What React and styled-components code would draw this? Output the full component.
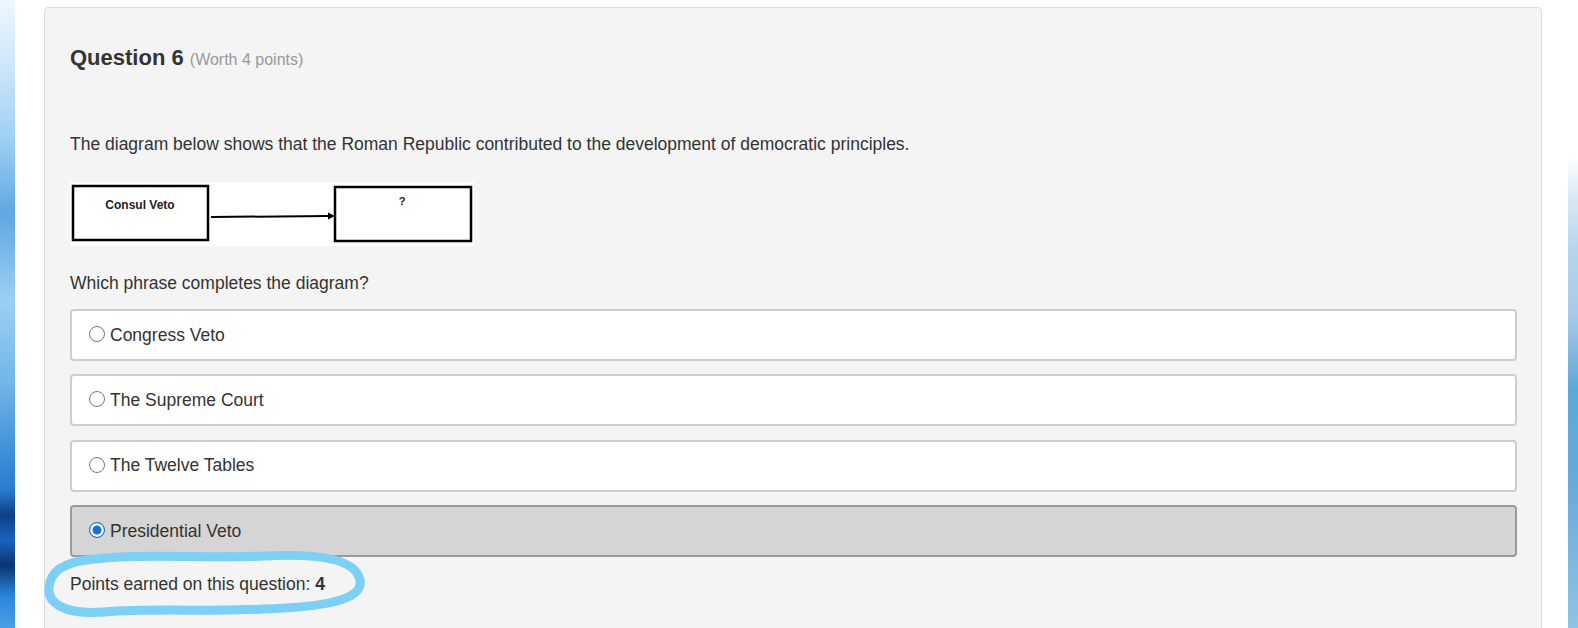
import React from "react";
import styled, { createGlobalStyle } from "styled-components";

const GlobalStyle = createGlobalStyle`
  html, body {
    margin: 0;
    padding: 0;
    background: #fff;
  }
  body {
    font-family: "Liberation Sans", Arial, sans-serif;
    color: #333;
  }
`;

const Page = styled.div`
  display: flex;
  height: 628px;
  overflow: hidden;
`;

const Wallpaper = styled.div`
  width: 15px;
  flex-shrink: 0;
  background: linear-gradient(
    180deg,
    #eef7fd 0%,
    #cfe7f9 10%,
    #9fd0f3 22%,
    #5fa8e2 34%,
    #9ccff3 48%,
    #6eb3e8 62%,
    #3f8fd8 72%,
    #2a7bd0 78%,
    #0d3f86 82%,
    #1b63be 86%,
    #0b3470 90%,
    #2c86dc 95%,
    #4aa0e4 100%
  );
`;

const SideStrip = styled.div`
  width: 10px;
  flex-shrink: 0;
  background: linear-gradient(
    180deg,
    #fff 0%,
    #fff 25%,
    #dbeaf5 31%,
    #b4d4ec 40%,
    #a7cbe8 50%,
    #5ca8dc 62%,
    #63a9db 75%,
    #8ec4e6 100%
  );
`;

const Main = styled.main`
  flex: 1;
  padding: 7px 26px 0 29px;
`;

const Panel = styled.section`
  background: #f4f4f4;
  border: 1px solid #dcdcdc;
  border-radius: 4px;
  padding: 38px 24px 60px 25px;
  min-height: 700px;
`;

const Heading = styled.h2`
  margin: 0;
  font-size: 22px;
  line-height: 24px;
  font-weight: bold;
  color: #333;
`;

const Worth = styled.span`
  font-size: 16px;
  font-weight: normal;
  color: #999;
`;

const Text = styled.p`
  margin: ${(p) => p.$top}px 0 0;
  font-size: 17.5px;
  line-height: 25px;
  color: #333;
`;

const Diagram = styled.svg`
  display: block;
  margin-top: 25px;
`;

const Options = styled.div`
  display: flex;
  flex-direction: column;
  gap: 13.4px;
  margin-top: 13.5px;
`;

const Option = styled.label`
  box-sizing: border-box;
  height: 52px;
  display: flex;
  align-items: center;
  gap: 5px;
  padding: 0 16px 0 17px;
  border: 2px solid ${(p) => (p.$selected ? "#9a9a9a" : "#cdcdcd")};
  border-radius: 4px;
  background: ${(p) => (p.$selected ? "#d5d5d5" : "#fff")};
  font-size: 17.5px;
  color: #333;
`;

const Radio = styled.input`
  appearance: none;
  box-sizing: border-box;
  width: 16px;
  height: 16px;
  margin: -2px 0 0;
  flex-shrink: 0;
  border-radius: 50%;
  border: 1px solid #767676;
  background: #fff;

  &:checked {
    border-color: #1a6fd8;
    background: #1a6fd8;
    box-shadow: inset 0 0 0 2.5px #fff;
  }
`;

const Points = styled.div`
  position: relative;
  margin-top: 14.5px;
  font-size: 17.5px;
  line-height: 25px;
  color: #333;
`;

const Scribble = styled.svg`
  position: absolute;
  left: -30px;
  top: -26px;
  pointer-events: none;
`;

const choices = [
  "Congress Veto",
  "The Supreme Court",
  "The Twelve Tables",
  "Presidential Veto",
];

function FlowDiagram() {
  return (
    <Diagram width="404" height="64" viewBox="0 0 404 64">
      <rect x="0" y="0" width="404" height="64" fill="#fff" />
      <rect x="3" y="4" width="135" height="54" fill="#fff" stroke="#000" strokeWidth="2.5" />
      <rect x="265" y="5" width="136" height="54" fill="#fff" stroke="#000" strokeWidth="2.5" />
      <line x1="141" y1="35" x2="259" y2="34" stroke="#000" strokeWidth="2" />
      <polygon points="265,34 258,30.5 258,37.5" fill="#000" />
      <text
        x="70"
        y="27"
        textAnchor="middle"
        fontFamily="Liberation Sans, Arial, sans-serif"
        fontWeight="bold"
        fontSize="12"
        fill="#222"
      >
        Consul Veto
      </text>
      <text
        x="332"
        y="23"
        textAnchor="middle"
        fontFamily="Liberation Sans, Arial, sans-serif"
        fontWeight="bold"
        fontSize="11"
        fill="#222"
      >
        ?
      </text>
    </Diagram>
  );
}

export default function App() {
  const selected = 3;
  return (
    <>
      <GlobalStyle />
      <Page>
        <Wallpaper />
        <Main>
          <Panel>
            <Heading>
              Question 6 <Worth>(Worth 4 points)</Worth>
            </Heading>
            <Text $top={59.5}>
              The diagram below shows that the Roman Republic contributed to the
              development of democratic principles.
            </Text>
            <FlowDiagram />
            <Text $top={25}>Which phrase completes the diagram?</Text>
            <Options>
              {choices.map((c, i) => (
                <Option key={c} $selected={i === selected}>
                  <Radio type="radio" name="q6" checked={i === selected} readOnly />
                  {c}
                </Option>
              ))}
            </Options>
            <Points>
              Points earned on this question: <strong>4</strong>
              <Scribble width="340" height="80" viewBox="0 0 340 80">
                <path
                  d="M 40 15 C 95 6, 165 13, 225 10 C 285 7, 316 15, 320 34 C 324 54, 284 61, 224 63 C 164 66, 114 62, 64 66 C 24 69, 7 57, 9 41 C 11 25, 22 17, 52 13"
                  fill="none"
                  stroke="#7ccff5"
                  strokeWidth="9"
                  strokeLinecap="round"
                  strokeLinejoin="round"
                />
              </Scribble>
            </Points>
          </Panel>
        </Main>
        <SideStrip />
      </Page>
    </>
  );
}
